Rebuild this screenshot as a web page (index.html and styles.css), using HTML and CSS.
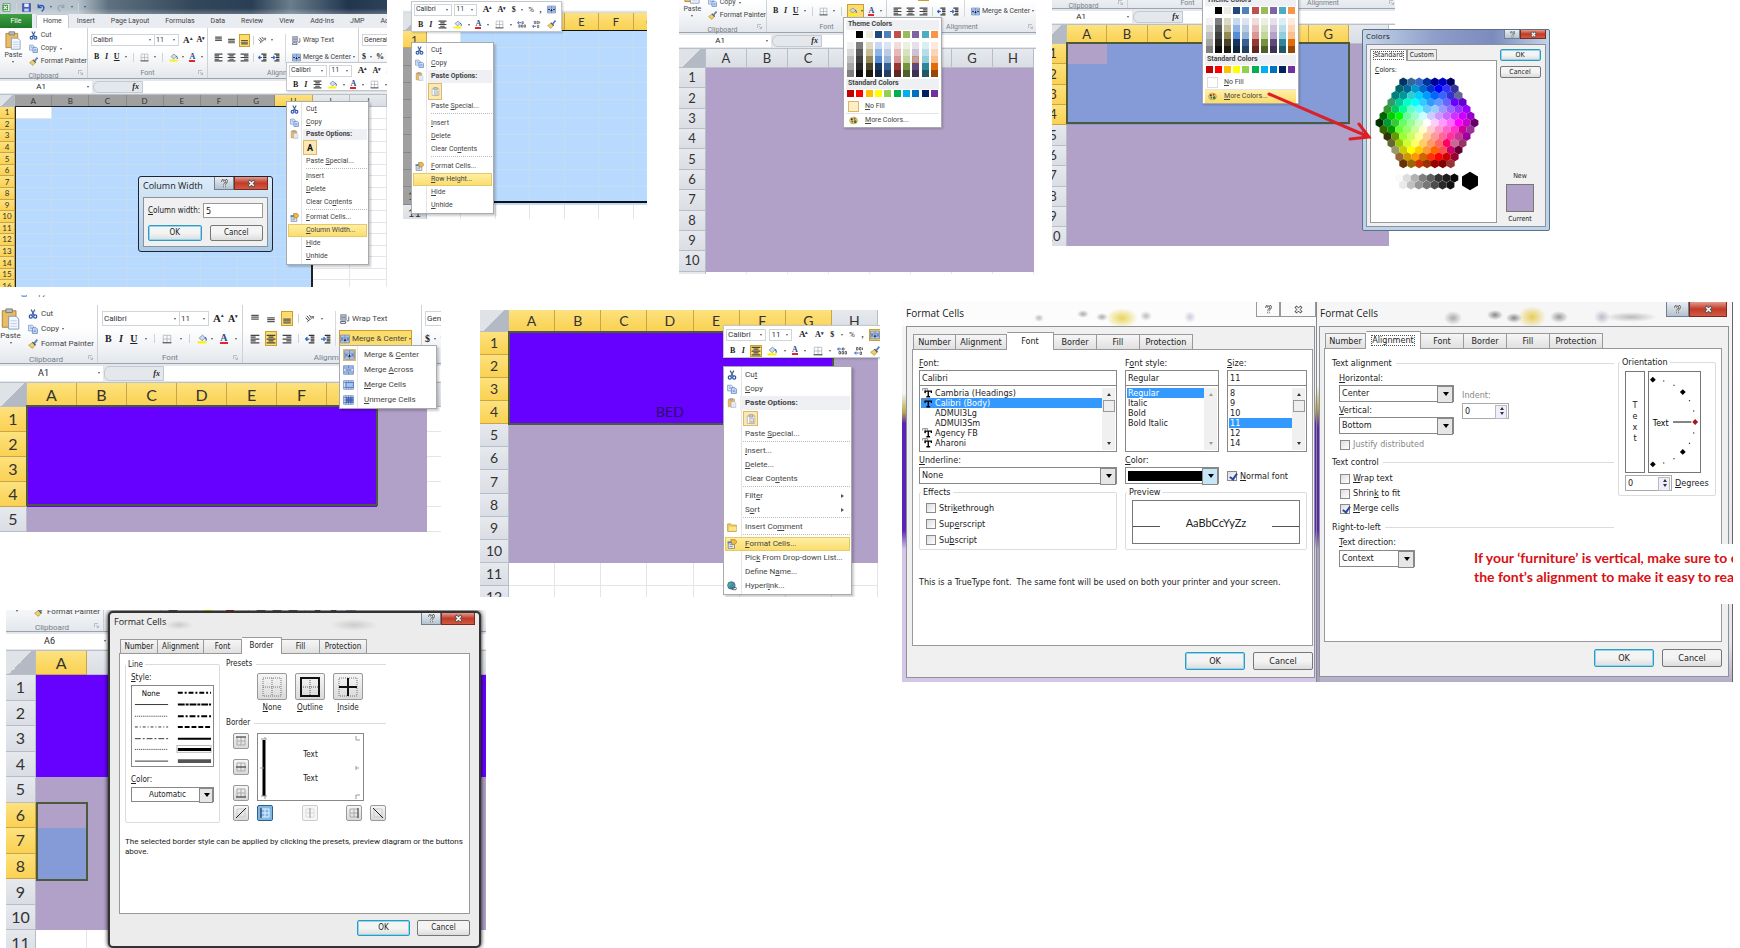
FILE: index.html
```html
<!DOCTYPE html>
<html lang="en">
<head>
<meta charset="utf-8">
<title>Spreadsheet floor plan: step by step</title>
<link rel="stylesheet" href="styles.css">
</head>
<body>
<svg class="defs" aria-hidden="true">
  <symbol id="i-excel" viewBox="0 0 16 16"><path d="M2 1h12v14H2z" fill="#fff" stroke="#2b7a2f"/><path d="M1 3h10v10H1z" fill="#3a9440"/><path d="M3 5l6 6M9 5l-6 6" stroke="#fff" stroke-width="2"/></symbol>
  <symbol id="i-save" viewBox="0 0 16 16"><path d="M1 1h14v14H1z" fill="#4a5fc0" stroke="#27348a"/><path d="M4 1h8v6H4z" fill="#e8eefc"/><path d="M4 10h8v5H4z" fill="#c5cdec"/></symbol>
  <symbol id="i-undo" viewBox="0 0 16 16"><path d="M4 2v6h6M4 8c3-6 10-4 10 1 0 3-2 5-4 6" fill="none" stroke="#2c55b8" stroke-width="2.5"/></symbol>
  <symbol id="i-redo" viewBox="0 0 16 16"><path d="M12 2v6H7M12 8C9 2 2 4 2 9c0 3 2 5 4 6" fill="none" stroke="#9aa3ad" stroke-width="2"/></symbol>
  <symbol id="i-cut" viewBox="0 0 16 16"><path d="M5 1l5 9M11 1L6 10" stroke="#46628f" stroke-width="2" fill="none"/><circle cx="4.500" cy="12" r="2.500" fill="none" stroke="#2954b0" stroke-width="2"/><circle cx="11.500" cy="12" r="2.500" fill="none" stroke="#2954b0" stroke-width="2"/></symbol>
  <symbol id="i-copy" viewBox="0 0 16 16"><path d="M1 2h6l2 2v7H1z" fill="#e6effc" stroke="#4f79bd"/><path d="M7 6h6l2 2v7H7z" fill="#cfe0f8" stroke="#3563b0"/><path d="M9 10h4M9 12h4M3 5h3M3 7h3" stroke="#5a83c6"/></symbol>
  <symbol id="i-paste" viewBox="0 0 20 24"><path d="M1 3h15v18H1z" fill="#e9bd63" stroke="#a97c2c"/><path d="M5 1h7v4H5z" fill="#b9bcc2" stroke="#777"/><path d="M8 9h8l3 3v11H8z" fill="#f4f8ff" stroke="#7d93b5"/><path d="M10 14h7M10 17h7M10 20h7" stroke="#b9c9e2"/></symbol>
  <symbol id="i-clip" viewBox="0 0 16 16"><path d="M2 3h12v12H2z" fill="#fff" stroke="#999"/><path d="M5 1h6v4H5z" fill="#ccc" stroke="#888"/><path d="M6 7h6v7H6z" fill="#f5f5f5" stroke="#999"/><path d="M7 10h4M7 12h4" stroke="#aaa"/></symbol>
  <symbol id="i-brush" viewBox="0 0 16 16"><path d="M15 1l-5 6" stroke="#5b7fc0" stroke-width="3"/><path d="M8 5l4 4-5 6-6-5z" fill="#efd264" stroke="#a68425"/><path d="M7 5l5 5" stroke="#4a5a78" stroke-width="2"/></symbol>
  <symbol id="i-borders" viewBox="0 0 16 16"><path d="M2 2h12M2 8h12M2 2v12M8 2v12M14 2v12" stroke="#9aa0a8" fill="none"/><path d="M1 14h14" stroke="#555" stroke-width="2"/></symbol>
  <symbol id="i-bucket" viewBox="0 0 18 16"><path d="M1 12h16v4H1z" fill="#fff200"/><path d="M4 6l6-5 5 5-6 5z" fill="#cfdcee" stroke="#47618c"/><path d="M14 5c3 1 3 4 2 6" stroke="#2c5aa8" stroke-width="2" fill="none"/></symbol>
  <symbol id="i-top" viewBox="0 0 16 16"><path d="M2 2h12M2 5h12M2 8h12" stroke="#555" stroke-width="2"/></symbol>
  <symbol id="i-mid" viewBox="0 0 16 16"><path d="M2 6h12M2 9h12M2 12h12" stroke="#555" stroke-width="2"/></symbol>
  <symbol id="i-bot" viewBox="0 0 16 16"><path d="M2 8h12M2 11h12M2 14h12" stroke="#555" stroke-width="2"/></symbol>
  <symbol id="i-left" viewBox="0 0 16 16"><path d="M1 2h14M1 5h8M1 8h14M1 11h8M1 14h14" stroke="#444" stroke-width="2"/></symbol>
  <symbol id="i-center" viewBox="0 0 16 16"><path d="M1 2h14M4 5h8M1 8h14M4 11h8M1 14h14" stroke="#444" stroke-width="2"/></symbol>
  <symbol id="i-right" viewBox="0 0 16 16"><path d="M1 2h14M7 5h8M1 8h14M7 11h8M1 14h14" stroke="#444" stroke-width="2"/></symbol>
  <symbol id="i-orient" viewBox="0 0 16 16"><path d="M3 13L14 4M14 4l-4 0M14 4l-1 4" stroke="#777" stroke-width="1.500" fill="none"/><path d="M1 6l5 5M3 3l5 6M7 2l3 4" stroke="#333" stroke-width="1.500"/></symbol>
  <symbol id="i-outdent" viewBox="0 0 16 16"><path d="M6 2h9M9 5h6M9 8h6M9 11h6M6 14h9" stroke="#333" stroke-width="2"/><path d="M7 8H2M4 5L1 8l3 3" stroke="#2c5ec4" stroke-width="2" fill="none"/></symbol>
  <symbol id="i-indent" viewBox="0 0 16 16"><path d="M6 2h9M9 5h6M9 8h6M9 11h6M6 14h9" stroke="#333" stroke-width="2"/><path d="M0 8h5M4 5l3 3-3 3" stroke="#2c5ec4" stroke-width="2" fill="none"/></symbol>
  <symbol id="i-wrap" viewBox="0 0 16 16"><path d="M1 1h9v4H1zM1 6h9v4H1z" fill="#b5bcc7" stroke="#6b7482"/><path d="M1 12h8v3H1zM14 4v7h-3" fill="none" stroke="#55617a" stroke-width="1.500"/></symbol>
  <symbol id="i-merge" viewBox="0 0 18 16"><path d="M1 1h16v14H1z" fill="#b9cdee" stroke="#4d6ea9"/><path d="M1 5h16M1 11h16M9 1v4M9 11v4" stroke="#4d6ea9"/><path d="M2 8h4M12 8h4" stroke="#1c3f91" stroke-width="2"/><path d="M7 11l2-5 2 5z" fill="#111"/></symbol>
  <symbol id="i-across" viewBox="0 0 18 16"><path d="M1 1h16v14H1z" fill="#a9c3ee" stroke="#4d6ea9"/><path d="M1 5h16M1 11h16M9 1v4M9 11v4" stroke="#4d6ea9"/><path d="M2 6h14v4H2z" fill="#e8f0fc"/><path d="M4 8h10" stroke="#1c3f91" stroke-width="1.500"/></symbol>
  <symbol id="i-cells" viewBox="0 0 18 16"><path d="M1 1h16v14H1z" fill="#dce8fa" stroke="#4d6ea9"/><path d="M1 4h16M5 1v14M13 1v3M13 12v3M1 12h16M9 1v3M9 12v3" stroke="#4d6ea9"/><path d="M5 4h12v8H5z" fill="#a4c4f4" stroke="#3461b6"/></symbol>
  <symbol id="i-unmerge" viewBox="0 0 18 16"><path d="M1 1h16v14H1z" fill="#dce8fa" stroke="#4d6ea9"/><path d="M5 4h12v8H5z" fill="#5c86d8"/><path d="M1 4h16M1 8h16M1 12h16M5 1v14M9 1v14M13 1v14" stroke="#2d4f9a"/></symbol>
  <symbol id="i-format" viewBox="0 0 16 16"><path d="M2 5h10v10H2z" fill="#e9edf5" stroke="#54657f"/><path d="M4 9h5M4 12h5" stroke="#54657f"/><path d="M6 1h7l3 4-4 4H8z" fill="#eebb4a" stroke="#a5711a"/><path d="M1 4h6v3H1z" fill="#5d7fb5"/></symbol>
  <symbol id="i-folder" viewBox="0 0 16 16"><path d="M1 3h5l2 2h7v10H1z" fill="#f2cf56" stroke="#a7841e"/><path d="M3 8h12v6H3z" fill="#fbe68d"/></symbol>
  <symbol id="i-globe" viewBox="0 0 16 16"><circle cx="7" cy="7" r="6" fill="#3f86c8" stroke="#27568e"/><path d="M4 3c3-1 5 1 3 3s-4 2-4 4c-2-2-2-5 1-7zM9 7l3-1c1 3-1 5-3 6z" fill="#57b05a"/><rect x="8" y="10" width="7" height="4" rx="2" fill="none" stroke="#555" stroke-width="1.500"/></symbol>
  <symbol id="i-palette" viewBox="0 0 16 16"><ellipse cx="8" cy="8" rx="7" ry="6" fill="#f0d66c" stroke="#a7882c"/><circle cx="5" cy="6" r="1.800" fill="#333"/><circle cx="10" cy="5" r="1.800" fill="#c33"/><circle cx="11" cy="10" r="2.500" fill="#2c7a35"/><circle cx="6" cy="10" r="1.500" fill="#2a5bc0"/></symbol>
  <symbol id="i-launch" viewBox="0 0 10 10"><path d="M1 8V1h7" fill="none" stroke="#8b9199"/><path d="M4 4l4 4M9 5v4H5" fill="none" stroke="#8b9199"/></symbol>
  <symbol id="i-inc" viewBox="0 0 20 16"><path d="M9 4H2M4 1L1 4l3 3" stroke="#2c5ec4" stroke-width="2" fill="none"/><path d="M11 2h3v4h-3zM4 9h3v5H4zM10 9h3v5h-3zM16 9h3v5h-3z" stroke="#444" stroke-width="1.500" fill="none"/></symbol>
  <symbol id="i-dec" viewBox="0 0 20 16"><path d="M9 12H2M4 9l-3 3 3 3" stroke="#2c5ec4" stroke-width="2" fill="none"/><path d="M5 1h3v5H5zM11 1h3v5h-3zM17 1v5M12 10h3v5h-3z" stroke="#444" stroke-width="1.500" fill="none"/></symbol>
  <symbol id="i-help" viewBox="0 0 12 12"><path d="M3 4c0-4 6-4 6-1 0 2-3 2-3 5M6 9v2" fill="none" stroke="#555" stroke-width="3"/><path d="M3 4c0-4 6-4 6-1 0 2-3 2-3 5M6 9v2" fill="none" stroke="#fff" stroke-width="1.200"/></symbol>
  <symbol id="i-x" viewBox="0 0 12 12"><path d="M2 2l8 8M10 2L2 10" stroke="#555" stroke-width="4"/><path d="M3 3l6 6M9 3L3 9" stroke="#fff" stroke-width="2"/></symbol>
  <symbol id="i-tt" viewBox="0 0 16 16"><path d="M1 4V1h8v3M5 1v8" stroke="#888" stroke-width="1.500" fill="none"/><path d="M5 8V5h10v3M10 5v9M7 14h6" stroke="#000" stroke-width="2.200" fill="none"/></symbol>
</svg>

<template id="ribbon-tpl">
  <div class="ribbon">
    <section class="grp grp-clip">
      <div class="clip">
        <button class="paste"><svg class="paste-ic"><use href="#i-paste"/></svg>Paste<i class="dd"></i></button>
        <div class="clip-list">
          <button><svg class="ic"><use href="#i-cut"/></svg>Cut</button>
          <button><svg class="ic"><use href="#i-copy"/></svg>Copy <i class="dd"></i></button>
          <button><svg class="ic"><use href="#i-brush"/></svg>Format Painter</button>
        </div>
      </div>
      <footer>Clipboard<svg class="launch"><use href="#i-launch"/></svg></footer>
    </section>
    <section class="grp grp-font">
      <div class="row"><span class="combo combo-name"><select aria-label="Font"><option>Calibri</option></select></span><span class="combo combo-size"><select aria-label="Font size"><option>11</option></select></span><button class="glyph big">A<sup>▴</sup></button><button class="glyph">A<sup>▾</sup></button></div>
      <div class="row spread"><button class="glyph">B</button><button class="glyph it">I</button><button class="glyph ul">U</button><i class="dd"></i><i class="vr"></i><button aria-label="Borders"><svg class="ic"><use href="#i-borders"/></svg></button><i class="dd"></i><i class="vr"></i><button class="fillbtn" aria-label="Fill color"><svg class="ic"><use href="#i-bucket"/></svg><i class="dd"></i></button><button class="glyph fc" aria-label="Font color">A</button><i class="dd"></i></div>
      <footer>Font<svg class="launch"><use href="#i-launch"/></svg></footer>
    </section>
    <section class="grp grp-align">
      <div class="al">
        <div class="al-left">
          <div class="row"><button aria-label="Top"><svg class="ic"><use href="#i-top"/></svg></button><button aria-label="Middle"><svg class="ic"><use href="#i-mid"/></svg></button><button class="on" aria-label="Bottom"><svg class="ic"><use href="#i-bot"/></svg></button><i class="vr"></i><button aria-label="Orientation"><svg class="ic"><use href="#i-orient"/></svg></button><i class="dd"></i></div>
          <div class="row"><button aria-label="Left"><svg class="ic"><use href="#i-left"/></svg></button><button class="al-c" aria-label="Center"><svg class="ic"><use href="#i-center"/></svg></button><button aria-label="Right"><svg class="ic"><use href="#i-right"/></svg></button><i class="vr"></i><button aria-label="Outdent"><svg class="ic"><use href="#i-outdent"/></svg></button><button aria-label="Indent"><svg class="ic"><use href="#i-indent"/></svg></button></div>
        </div>
        <div class="al-right">
          <button class="wide"><svg class="ic"><use href="#i-wrap"/></svg>Wrap Text</button>
          <button class="wide mc"><svg class="ic"><use href="#i-merge"/></svg>Merge &amp; Center <i class="dd"></i></button>
        </div>
      </div>
      <footer>Alignment<svg class="launch"><use href="#i-launch"/></svg></footer>
    </section>
    <section class="grp grp-num">
      <div class="row"><span class="combo combo-fmt"><select aria-label="Number format"><option>General</option></select></span></div>
      <div class="row"><button class="glyph">$</button><i class="dd"></i><button class="glyph">%</button></div>
    </section>
  </div>
</template>

<template id="mini-tpl">
  <div class="row"><span class="combo combo-name"><select aria-label="Font"><option>Calibri</option></select></span><span class="combo combo-size"><select aria-label="Font size"><option>11</option></select></span><button class="glyph big">A<sup>▴</sup></button><button class="glyph">A<sup>▾</sup></button><button class="glyph">$</button><i class="dd"></i><button class="pct">%</button><button class="glyph">,</button><button class="mm" aria-label="Merge"><svg class="ic"><use href="#i-merge"/></svg></button></div>
  <div class="row"><button class="glyph">B</button><button class="glyph it">I</button><button class="mcen" aria-label="Center"><svg class="ic"><use href="#i-center"/></svg></button><button aria-label="Fill color"><svg class="ic"><use href="#i-bucket"/></svg></button><i class="dd"></i><button class="glyph fc" aria-label="Font color">A</button><i class="dd"></i><button aria-label="Borders"><svg class="ic"><use href="#i-borders"/></svg></button><i class="dd"></i><button aria-label="Increase decimal"><svg class="ic"><use href="#i-inc"/></svg></button><button aria-label="Decrease decimal"><svg class="ic"><use href="#i-dec"/></svg></button><button aria-label="Format painter"><svg class="ic"><use href="#i-brush"/></svg></button></div>
</template>

<main class="board">
  <div class="strip">
    <div class="pair">
      <figure class="shot s-col">
        <header class="titlebar"><svg class="ic"><use href="#i-excel"/></svg><i class="vr"></i><svg class="ic"><use href="#i-save"/></svg><svg class="ic"><use href="#i-undo"/></svg><i class="dd"></i><svg class="ic"><use href="#i-redo"/></svg><i class="dd"></i><i class="vr"></i><i class="dd"></i></header>
        <nav class="tabs"><a class="file" href="#">File</a><a class="cur" href="#">Home</a><a href="#">Insert</a><a href="#">Page Layout</a><a href="#">Formulas</a><a href="#">Data</a><a href="#">Review</a><a href="#">View</a><a href="#">Add-Ins</a><a href="#">JMP</a><a href="#">Acrobat</a></nav>
        <div data-tpl="ribbon-tpl"></div>
        <div class="fbar"><span class="name">A1<i class="dd"></i></span><span class="fx"><em>fx</em></span><input aria-label="Formula"></div>
        <table class="sheet" data-cols="ABCDEFGHIJ" data-rows="16" data-hot="H1:H16" data-hotrows data-mute="ABCDEFG" data-fill="A1:H16=blue A1:A1=white"></table>
        <i class="edge edge-col"></i>
        <section class="dialog d-col">
          <header><h2>Column Width</h2><span class="caps"><button aria-label="Help"><svg><use href="#i-help"/></svg></button><button class="close" aria-label="Close"><svg><use href="#i-x"/></svg></button></span></header>
          <div class="pane">
            <div class="field"><label for="cw"><u>C</u>olumn width:</label><input id="cw" value="5"></div>
            <div class="btns"><button class="btn def">OK</button><button class="btn">Cancel</button></div>
          </div>
        </section>
        <div class="mini" data-tpl="mini-tpl"></div>
        <ul class="menu">
          <li><button><svg class="ic"><use href="#i-cut"/></svg>Cu<u>t</u></button></li>
          <li><button><svg class="ic"><use href="#i-copy"/></svg><u>C</u>opy</button></li>
          <li class="head"><svg class="ic"><use href="#i-paste"/></svg>Paste Options:</li>
          <li class="opt"><button class="tile">A</button></li>
          <li><button>Paste <u>S</u>pecial...</button></li>
          <li class="sep"></li>
          <li><button><u>I</u>nsert</button></li>
          <li><button><u>D</u>elete</button></li>
          <li><button>Clear Co<u>n</u>tents</button></li>
          <li class="sep"></li>
          <li><button><svg class="ic"><use href="#i-format"/></svg><u>F</u>ormat Cells...</button></li>
          <li class="hot"><button><u>C</u>olumn Width...</button></li>
          <li><button><u>H</u>ide</button></li>
          <li><button><u>U</u>nhide</button></li>
        </ul>
      </figure>
      <figure class="shot s-row">
        <div class="band"></div>
        <table class="sheet" data-cols="ABCDEFG" data-rows="11" data-hot="A1:G1" data-muterows="2-10" data-fill="A1:G10=blue A1:A1=white"></table>
        <i class="edge edge-row"></i>
        <div class="mini" data-tpl="mini-tpl"></div>
        <ul class="menu">
          <li><button><svg class="ic"><use href="#i-cut"/></svg>Cu<u>t</u></button></li>
          <li><button><svg class="ic"><use href="#i-copy"/></svg><u>C</u>opy</button></li>
          <li class="head"><svg class="ic"><use href="#i-paste"/></svg>Paste Options:</li>
          <li class="opt"><button class="tile" aria-label="Paste"><svg class="ic"><use href="#i-clip"/></svg></button></li>
          <li><button>Paste <u>S</u>pecial...</button></li>
          <li class="sep"></li>
          <li><button><u>I</u>nsert</button></li>
          <li><button><u>D</u>elete</button></li>
          <li><button>Clear Co<u>n</u>tents</button></li>
          <li class="sep"></li>
          <li><button><svg class="ic"><use href="#i-format"/></svg><u>F</u>ormat Cells...</button></li>
          <li class="hot"><button><u>R</u>ow Height...</button></li>
          <li><button><u>H</u>ide</button></li>
          <li><button><u>U</u>nhide</button></li>
        </ul>
      </figure>
    </div>
    <div class="pair">
      <figure class="shot s-fill">
        <div data-tpl="ribbon-tpl"></div>
        <div class="fbar"><span class="name">A1<i class="dd"></i></span><span class="fx"><em>fx</em></span><input aria-label="Formula"></div>
        <table class="sheet" data-cols="ABCDEFGH" data-rows="11" data-fill="A1:H10=lilac"></table>
        <div class="palette" data-palette></div>
      </figure>
      <figure class="shot s-more">
        <div class="crop">
          <div class="slide">
            <div data-tpl="ribbon-tpl"></div>
            <div class="fbar"><span class="name">A1<i class="dd"></i></span><span class="fx"><em>fx</em></span><input aria-label="Formula"></div>
            <table class="sheet" data-cols="ABCDEFGH" data-rows="11" data-hot="A1:G4" data-fill="A1:H10=lilac A1:G4=steel A1:A1=lilac"></table>
          </div>
          <i class="edge edge-sel"></i>
          <div class="palette" data-palette></div>
        </div>
        <section class="dialog d-colors">
          <header><h2>Colors</h2><span class="caps"><button aria-label="Help"><svg><use href="#i-help"/></svg></button><button class="close" aria-label="Close"><svg><use href="#i-x"/></svg></button></span></header>
          <div class="pane">
            <div class="picker">
              <div class="ptabs"><button class="cur"><span>Standard</span></button><button>Custom</button></div>
              <div class="sheet-page"><label><u>C</u>olors:</label><svg id="hexes" class="hexes" viewBox="0 0 112 120"></svg></div>
            </div>
            <div class="side"><button class="btn def">OK</button><button class="btn">Cancel</button><span class="new">New</span><i class="chip"></i><span>Current</span></div>
          </div>
        </section>
        <svg class="arrow" viewBox="0 0 110 60"><path d="M3 4L103 47M93 34l10 13-19 2" fill="none" stroke="#dd2027" stroke-width="3" stroke-linecap="round"/></svg>
      </figure>
    </div>
  </div>

  <div class="strip lower">
    <div class="left">
      <div class="pair wide-gap">
        <figure class="shot s-merge">
          <div class="sliver"><svg class="ic"><use href="#i-copy"/></svg>Copy</div>
          <div class="lg" data-tpl="ribbon-tpl"></div>
          <div class="fbar lg"><span class="name">A1<i class="dd"></i></span><span class="fx"><em>fx</em></span><input aria-label="Formula"></div>
          <table class="sheet" data-cols="ABCDEFGHI" data-rows="5" data-hot="A1:G4" data-fill="A1:H5=lilac A1:G4=violet"></table>
          <i class="edge edge-sel"></i>
          <ul class="menu drop">
            <li><button><span class="tile"><svg class="ic"><use href="#i-merge"/></svg></span>Merge &amp; <u>C</u>enter</button></li>
            <li><button><svg class="ic"><use href="#i-across"/></svg>Merge <u>A</u>cross</button></li>
            <li><button><svg class="ic"><use href="#i-cells"/></svg><u>M</u>erge Cells</button></li>
            <li><button><svg class="ic"><use href="#i-unmerge"/></svg><u>U</u>nmerge Cells</button></li>
          </ul>
        </figure>
        <figure class="shot s-bed">
          <table class="sheet" data-cols="ABCDEFGH" data-rows="12" data-hot="A1:G4" data-fill="A1:H10=lilac A1:G4=violet" data-text="D4=BED"></table>
          <i class="edge edge-sel"></i>
          <div class="mini" data-tpl="mini-tpl"></div>
          <ul class="menu">
            <li><button><svg class="ic"><use href="#i-cut"/></svg>Cu<u>t</u></button></li>
            <li><button><svg class="ic"><use href="#i-copy"/></svg><u>C</u>opy</button></li>
            <li class="head"><svg class="ic"><use href="#i-paste"/></svg>Paste Options:</li>
            <li class="opt"><button class="tile" aria-label="Paste"><svg class="ic"><use href="#i-clip"/></svg></button></li>
            <li><button>Paste <u>S</u>pecial...</button></li>
            <li class="sep"></li>
            <li><button><u>I</u>nsert...</button></li>
            <li><button><u>D</u>elete...</button></li>
            <li><button>Clear Co<u>n</u>tents</button></li>
            <li class="sep"></li>
            <li><button>Filt<u>e</u>r<i class="sub"></i></button></li>
            <li><button>S<u>o</u>rt<i class="sub"></i></button></li>
            <li class="sep"></li>
            <li><button><svg class="ic"><use href="#i-folder"/></svg>Insert Co<u>m</u>ment</button></li>
            <li class="sep"></li>
            <li class="hot"><button><svg class="ic"><use href="#i-format"/></svg><u>F</u>ormat Cells...</button></li>
            <li><button>Pic<u>k</u> From Drop-down List...</button></li>
            <li><button>Define N<u>a</u>me...</button></li>
            <li><button><svg class="ic"><use href="#i-globe"/></svg>Hyperl<u>i</u>nk...</button></li>
          </ul>
        </figure>
      </div>
      <figure class="shot s-border">
        <div class="lg" data-tpl="ribbon-tpl"></div>
        <div class="fbar lg"><span class="name">A6<i class="dd"></i></span><span class="fx"><em>fx</em></span><input aria-label="Formula"></div>
        <table class="sheet" data-cols="ABCDEFGHI" data-rows="11" data-hot="A6:A8" data-fill="A1:I10=lilac A1:I4=violet A7:A8=steel"></table>
        <i class="edge edge-sel"></i>
        <section class="dialog fmt d-border">
          <header><h2>Format Cells</h2><span class="caps"><button aria-label="Help"><svg><use href="#i-help"/></svg></button><button class="close" aria-label="Close"><svg><use href="#i-x"/></svg></button></span></header>
          <div class="pane">
            <div class="ftabs"><button>Number</button><button>Alignment</button><button>Font</button><button class="cur">Border</button><button>Fill</button><button>Protection</button></div>
            <div class="page">
              <div class="bcols">
                <fieldset class="line"><legend>Line</legend>
                  <span class="lbl"><u>S</u>tyle:</span>
                  <svg class="styles" viewBox="0 0 83 82">
                    <rect x="46" y="61" width="35" height="7" fill="none" stroke="#bbb"/>
                    <g stroke="#333" fill="none"><path d="M3 19h34"/><path d="M3 31h34" stroke-dasharray="1 1"/><path d="M3 42h34" stroke-dasharray="3 2 1 2"/><path d="M3 54h34" stroke-dasharray="6 2 2 2"/><path d="M3 65h34" stroke-dasharray="1 1"/><path d="M3 77h34"/></g>
                    <g stroke="#000" fill="none" stroke-width="2"><path d="M47 7h34" stroke-dasharray="5 2 2 2"/><path d="M47 19h34" stroke-dasharray="7 1 3 1"/><path d="M47 31h34" stroke-dasharray="6 2 2 2"/><path d="M47 42h34" stroke-dasharray="5 2"/><path d="M47 54h34"/><path d="M47 65h34" stroke-width="3"/><path d="M47 76h34M47 78h34" stroke="#555"/></g>
                    <text x="10" y="10">None</text>
                  </svg>
                  <label class="lbl" for="bc"><u>C</u>olor:</label>
                  <span class="pick"><select id="bc"><option>Automatic</option></select></span>
                </fieldset>
                <div class="bright">
                  <div class="rule">Presets</div>
                  <div class="presets">
                    <div><button aria-label="None"><svg viewBox="0 0 22 22"><path d="M2 2h18v18H2zM11 2v18M2 11h18" fill="none" stroke="#777" stroke-dasharray="1 1"/></svg></button><span><u>N</u>one</span></div>
                    <div><button aria-label="Outline"><svg viewBox="0 0 22 22"><path d="M11 2v18M2 11h18" stroke="#555" stroke-dasharray="1 1"/><path d="M2 2h18v18H2z" fill="none" stroke="#111" stroke-width="2"/></svg></button><span><u>O</u>utline</span></div>
                    <div><button aria-label="Inside"><svg viewBox="0 0 22 22"><path d="M2 2h18v18H2z" fill="none" stroke="#777" stroke-dasharray="1 1"/><path d="M11 2v18M2 11h18" stroke="#111" stroke-width="2"/></svg></button><span><u>I</u>nside</span></div>
                  </div>
                  <div class="rule">Border</div>
                  <div class="bgrid">
                    <button aria-label="Top"><svg viewBox="0 0 12 12"><path d="M2 2v8h8V2M6 2v8M2 6h8" fill="none" stroke="#aaa"/><path d="M1 2h10" stroke="#222"/></svg></button>
                    <button aria-label="Middle"><svg viewBox="0 0 12 12"><path d="M2 2h8v8H2zM6 2v8" fill="none" stroke="#aaa"/><path d="M1 6h10" stroke="#222"/></svg></button>
                    <button aria-label="Bottom"><svg viewBox="0 0 12 12"><path d="M2 10V2h8v8M6 2v8M2 6h8" fill="none" stroke="#aaa"/><path d="M1 10h10" stroke="#222"/></svg></button>
                    <div class="prev"><span>Text</span><span>Text</span><svg viewBox="0 0 105 67"><path d="M6 6v56" stroke="#000" stroke-width="3"/><path d="M3 5h6M2 34h4M3 62h6M7 3v2M7 62v3M98 2v4h4M98 32v4M98 34h3M98 65v-4h4" fill="none" stroke="#999"/></svg></div>
                    <div class="brow">
                      <button aria-label="Diagonal up"><svg viewBox="0 0 12 12"><path d="M2 2h8v8H2z" fill="none" stroke="#ccc"/><path d="M1 11L11 1" stroke="#222"/></svg></button>
                      <button class="on" aria-label="Left"><svg viewBox="0 0 12 12"><path d="M2 2h8v8H2M6 2v8M2 6h8" fill="none" stroke="#e8f4ff"/><path d="M2 1v10" stroke="#113"/></svg></button>
                      <button class="off" aria-label="Vertical"><svg viewBox="0 0 12 12"><path d="M2 2h8v8H2zM2 6h8" fill="none" stroke="#ddd"/><path d="M6 1v10" stroke="#999"/></svg></button>
                      <button aria-label="Right"><svg viewBox="0 0 12 12"><path d="M10 2H2v8h8M6 2v8M2 6h8" fill="none" stroke="#aaa"/><path d="M10 1v10" stroke="#222"/></svg></button>
                      <button aria-label="Diagonal down"><svg viewBox="0 0 12 12"><path d="M2 2h8v8H2z" fill="none" stroke="#ccc"/><path d="M1 1l10 10" stroke="#222"/></svg></button>
                    </div>
                  </div>
                </div>
              </div>
              <p>The selected border style can be applied by clicking the presets, preview diagram or the buttons above.</p>
            </div>
            <div class="btns"><button class="btn def">OK</button><button class="btn">Cancel</button></div>
          </div>
        </section>
      </figure>
    </div>

    <div class="right">
      <figure class="shot s-font">
        <section class="dialog fmt d-font">
          <header><h2>Format Cells</h2><span class="caps pale"><button aria-label="Help"><svg><use href="#i-help"/></svg></button><button aria-label="Close"><svg><use href="#i-x"/></svg></button></span></header>
          <div class="pane">
            <div class="ftabs"><button>Number</button><button>Alignment</button><button class="cur">Font</button><button>Border</button><button>Fill</button><button>Protection</button></div>
            <div class="page">
              <div class="fcols">
                <div class="fcol"><label for="fn"><u>F</u>ont:</label><input id="fn" value="Calibri">
                  <div class="list"><ul role="listbox" class="named"><li><svg><use href="#i-tt"/></svg>Cambria (Headings)</li><li class="sel"><svg><use href="#i-tt"/></svg>Calibri (Body)</li><li>ADMUI3Lg</li><li>ADMUI3Sm</li><li><svg><use href="#i-tt"/></svg>Agency FB</li><li><svg><use href="#i-tt"/></svg>Aharoni</li></ul><span class="bar"><i class="up"></i><b></b><i class="dn"></i></span></div></div>
                <div class="fcol"><label for="fs">F<u>o</u>nt style:</label><input id="fs" value="Regular">
                  <div class="list"><ul role="listbox"><li class="sel">Regular</li><li>Italic</li><li>Bold</li><li>Bold Italic</li></ul><span class="bar dim"><i class="up"></i><i class="dn"></i></span></div></div>
                <div class="fcol"><label for="fz"><u>S</u>ize:</label><input id="fz" value="11">
                  <div class="list"><ul role="listbox"><li>8</li><li>9</li><li>10</li><li class="sel">11</li><li>12</li><li>14</li></ul><span class="bar"><i class="up"></i><b></b><i class="dn"></i></span></div></div>
                <div class="fcol"><label for="un"><u>U</u>nderline:</label><span class="pick"><select id="un"><option>None</option></select></span></div>
                <div class="fcol"><label for="co"><u>C</u>olor:</label><span class="pick ink"><select id="co" aria-label="Color"><option></option></select></span></div>
                <div class="fcol end"><label class="chk"><input type="checkbox" checked><span><u>N</u>ormal font</span></label></div>
              </div>
              <div class="fsets">
                <fieldset><legend>Effects</legend>
                  <label class="chk"><input type="checkbox"><span>Stri<u>k</u>ethrough</span></label>
                  <label class="chk"><input type="checkbox"><span>Sup<u>e</u>rscript</span></label>
                  <label class="chk"><input type="checkbox"><span>Su<u>b</u>script</span></label>
                </fieldset>
                <fieldset class="pv"><legend>Preview</legend><div class="sample"><i></i>AaBbCcYyZz<i></i></div></fieldset>
              </div>
              <p>This is a TrueType font.&nbsp; The same font will be used on both your printer and your screen.</p>
            </div>
            <div class="btns"><button class="btn def">OK</button><button class="btn">Cancel</button></div>
          </div>
        </section>
      </figure>
      <figure class="shot s-align">
        <section class="dialog fmt d-align">
          <header><h2>Format Cells</h2><span class="caps"><button aria-label="Help"><svg><use href="#i-help"/></svg></button><button class="close" aria-label="Close"><svg><use href="#i-x"/></svg></button></span></header>
          <div class="pane">
            <div class="ftabs"><button>Number</button><button class="cur"><span>Alignment</span></button><button>Font</button><button>Border</button><button>Fill</button><button>Protection</button></div>
            <div class="page">
              <div class="acols">
                <div class="amain">
                  <div class="rule">Text alignment</div>
                  <div class="agrid">
                    <div class="avert"><label for="ho"><u>H</u>orizontal:</label><span class="pick"><select id="ho"><option>Center</option></select></span><label for="ve"><u>V</u>ertical:</label><span class="pick"><select id="ve"><option>Bottom</option></select></span></div>
                    <div class="aind"><label for="ind">Indent:</label><span class="spin"><input id="ind" value="0"><i class="up"></i><i class="dn"></i></span></div>
                  </div>
                  <label class="chk ind dim"><input type="checkbox" disabled><span>Justify distributed</span></label>
                  <div class="rule">Text control</div>
                  <label class="chk ind"><input type="checkbox"><span><u>W</u>rap text</span></label>
                  <label class="chk ind"><input type="checkbox"><span>Shrin<u>k</u> to fit</span></label>
                  <label class="chk ind"><input type="checkbox" checked><span><u>M</u>erge cells</span></label>
                  <div class="rule">Right-to-left</div>
                  <div class="adir"><label for="td"><u>T</u>ext direction:</label><span class="pick"><select id="td"><option>Context</option></select></span></div>
                </div>
                <fieldset class="ori"><legend>Orientation</legend>
                  <div class="obox"><button class="otext"><span>T</span><span>e</span><span>x</span><span>t</span></button>
                    <svg class="dial" viewBox="0 0 53 102"><g id="dots"></g><path d="M25 51h19" stroke="#000"/><text x="4" y="55">Text</text></svg></div>
                  <div class="odeg"><span class="spin"><input id="deg" value="0"><i class="up"></i><i class="dn"></i></span><label for="deg"><u>D</u>egrees</label></div>
                </fieldset>
              </div>
            </div>
            <div class="btns"><button class="btn def">OK</button><button class="btn">Cancel</button></div>
          </div>
        </section>
        <figcaption class="note">If your ‘furniture’ is vertical, make sure to change<br>the font’s alignment to make it easy to read!</figcaption>
      </figure>
    </div>
  </div>
</main>
<script src="app.js"></script>
</body>
</html>
```
FILE: styles.css
```css
* { box-sizing: border-box; }
body { margin: 0; background: #fff; font-family: Roboto, "Open Sans", sans-serif; font-size: 7px; line-height: 1; color: #444; overflow: hidden; }
figure, h2, p, ul, fieldset { margin: 0; padding: 0; border: 0; }
ul { list-style: none; }
button, input, select { font: inherit; color: inherit; margin: 0; padding: 0; border: 0; background: none; border-radius: 0; white-space: nowrap; }
select { appearance: none; outline: 0; }
input { outline: 0; min-width: 0; }
button { display: inline-flex; align-items: center; justify-content: center; }
a { color: inherit; text-decoration: none; }
u { text-underline-offset: 1px; text-decoration-thickness: 1px; }
i { font-style: normal; }
.defs { position: absolute; width: 0; height: 0; }

/* page layout */
.board { display: flex; flex-direction: column; gap: 8px; }
.strip { display: flex; gap: 32px; height: 287px; }
.pair { display: flex; gap: 16px; }
.wide-gap { gap: 39px; }
.lower { gap: 22px; height: auto; }
.left { display: flex; flex-direction: column; gap: 13px; }
.right { display: flex; margin-top: 7px; }
.shot { position: relative; overflow: hidden; flex: none; align-self: flex-start; }
.s-col { width: 387px; height: 287px; }
.s-row { width: 244px; height: 219px; }
.s-fill { width: 357px; height: 274px; }
.s-more { width: 498px; height: 246px; }
.s-merge { width: 441px; height: 238px; }
.s-bed { width: 400px; height: 287px; margin-top: 15px; }
.s-border { width: 480px; height: 338px; margin-left: 6px; }
.s-font { width: 415px; }
.s-align { width: 416px; }

/* small parts */
.ic { width: 9px; height: 9px; flex: none; display: block; }
.dd { width: 0; height: 0; border: 1px solid transparent; border-top: 2px solid #555; border-bottom: 0; flex: none; outline: 0; box-sizing: content-box; }
.vr { width: 1px; height: 9px; background: #cfd3d8; flex: none; }
.glyph { font-family: "Liberation Serif", serif; font-weight: bold; font-size: 8px; color: #222; }
.glyph.big { font-size: 9px; }
.glyph sup { font-size: 5px; color: #335; line-height: 1; align-self: flex-start; }
.it { font-style: italic; }
.ul { text-decoration: underline; }
.fc { color: #2a4a8c; border-bottom: 2px solid #e0262d; line-height: 7px; }
.on { background: #fcdc6c; outline: 1px solid #c9a030; }

/* title bar and tabs */
.titlebar { display: flex; align-items: center; gap: 5px; height: 14px; padding: 0 2px; background: linear-gradient(#0000 60%, #ffffff40), linear-gradient(90deg, #c2ccd4 0, #b4c2cc 20%, #5f7180 28%, #33475a 50%, #2a3f54 65%, #6a7d8c 75%, #20364d 90%, #2d4258); }
.tabs { display: flex; align-items: center; gap: 16px; height: 14px; background: #e9edf1; white-space: nowrap; }
.tabs a { flex: none; }
.tabs .file { align-self: stretch; display: flex; align-items: center; justify-content: center; width: 32px; background: linear-gradient(#3fa043, #1f7a28); color: #fff; }
.tabs .cur { align-self: stretch; display: flex; align-items: center; padding: 0 6px; margin: 0 -8px 0 -12px; background: #fff; border-radius: 2px 2px 0 0; border: 1px solid #c4cad1; border-bottom: 0; }

/* ribbon */
.ribbon { display: flex; height: 51px; width: 480px; background: linear-gradient(#fff 40%, #f0f2f5 75%, #e3e7ec); border-bottom: 1px solid #9ba3ad; color: #444; }
.grp { display: flex; flex-direction: column; gap: 5px; padding: 6px 3px 0; border-right: 1px solid #cdd2d8; flex: none; position: relative; }
.grp footer { margin-top: auto; height: 10px; display: flex; justify-content: center; align-items: center; color: #777f88; }
.launch { position: absolute; right: 4px; bottom: 3px; width: 5px; height: 5px; }
.grp .row { display: flex; align-items: center; height: 12px; gap: 4px; }
.grp .grp-clip, .grp-clip { width: 88px; padding: 1px 0 0; }
.clip { display: flex; gap: 2px; }
.paste { flex-direction: column; width: 27px; justify-content: flex-start; padding-top: 2px; gap: 2px; }
.paste-ic { width: 16px; height: 19px; }
.clip-list { display: flex; flex-direction: column; }
.clip-list button { height: 13px; justify-content: flex-start; gap: 3px; }
.grp-font { width: 120px; }
.grp .spread { justify-content: space-between; padding: 0 1px 0 3px; }
.fillbtn { gap: 4px; height: 12px; }
.grp-align { width: 151px; }
.al { display: flex; gap: 6px; }
.al-left { display: flex; flex-direction: column; gap: 5px; width: 75px; border-right: 1px solid #d6dae0; padding-left: 3px; }
.al-left .row button { width: 9px; height: 11px; }
.al-right { display: flex; flex-direction: column; gap: 5px; }
.wide { height: 12px; gap: 2px; justify-content: flex-start; }
.grp-num { width: 117px; border: 0; }
.combo { display: inline-flex; align-items: center; height: 12px; background: #fff; border: 1px solid #d0d5db; position: relative; flex: none; }
.combo select { width: 100%; padding-left: 1px; color: #333; }
.combo::after { content: ""; position: absolute; right: 3px; border: 1px solid transparent; border-top: 2px solid #555; border-bottom: 0; }
.combo-name { width: 64px; }
.combo-size { width: 25px; margin-left: -5px; }
.combo-fmt { width: 60px; }
.lg { font-size: 8px; }
.lg .ribbon { height: 59px; width: 500px; margin-left: -5px; }
.lg .ic { width: 10px; height: 10px; }
.lg .glyph { font-size: 10px; }
.lg .glyph.big { font-size: 11px; }
.lg .fc { line-height: 8px; }
.lg .grp .row, .lg .combo, .lg .wide { height: 15px; }
.lg .grp-clip { width: 103px; }
.lg .grp-font { width: 145px; padding: 6px 4px 0; }
.lg .grp-align { width: 179px; }
.lg .combo-name { width: 78px; }
.lg .combo-size { width: 30px; }
.lg .clip-list button { height: 15px; }
.lg .paste-ic { width: 19px; height: 22px; }
.lg .paste { width: 31px; }
.lg .al { gap: 4px; }
.lg .al-left { width: 90px; padding-left: 4px; }
.lg .al-left .row { gap: 6px; }
.lg .al-left .row button { width: 10px; height: 13px; }
.s-merge .al-c, .s-merge .mc { background: #fcdc6c; outline: 1px solid #c9a030; }
.s-fill .fillbtn { background: #fcdc6c; outline: 1px solid #c9a030; }
.fbar { display: flex; align-items: center; height: 16px; background: #e4e8ed; border-bottom: 1px solid #b9c0c8; }
.fbar .name { display: flex; align-items: center; justify-content: flex-end; gap: 41px; width: 92px; height: 12px; padding-right: 3px; background: #fff; color: #222; font-size: 8px; }
.fbar .fx { width: 50px; height: 12px; border-radius: 6px 0 0 6px; border: 1px solid #c3c9d0; margin-left: 1px; display: flex; align-items: center; justify-content: flex-end; padding-right: 3px; color: #222; }
.fbar em { font: italic bold 8px "Liberation Serif", serif; }
.fbar input { flex: 1; background: #fff; height: 12px; }
.fbar.lg { height: 19px; }
.fbar.lg .name { width: 103px; height: 15px; gap: 49px; font-size: 9px; }
.fbar.lg .fx { width: 60px; height: 15px; }
.fbar.lg input { height: 15px; }

/* worksheet */
.sheet { border-collapse: separate; border-spacing: 0; table-layout: fixed; font-family: Lato, "Open Sans", sans-serif; color: #333; text-align: center; flex: none; }
.sheet th, .sheet td { padding: 0; font-weight: normal; overflow: hidden; white-space: nowrap; line-height: 1; }
.sheet th { background: linear-gradient(#e6e9ee, #dadee4); border-right: 1px solid #b8bec7; border-bottom: 1px solid #b8bec7; }
.sheet td { border-right: 1px solid #e2e5ea; border-bottom: 1px solid #e2e5ea; background: #fff; }
.sheet .corner { background: linear-gradient(135deg, #dfe3e8 50%, #b4bac4 50%) no-repeat; }
.sheet th.hot { background: linear-gradient(#fde27e, #fad152); border-color: #c9a44a; }
.sheet th.mute { background: #a0a0a0; border-color: #888; }
.sheet .blue { background: #b8daff; border-color: #c6dcf2; }
.sheet .lilac { background: #b1a0c7; border-color: #b1a0c7; }
.sheet .steel { background: #849bd8; border-color: #849bd8; }
.sheet .violet { background: #6600ff; border-color: #6600ff; color: #2a1060; overflow: visible; }
.edge { position: absolute; pointer-events: none; }
.edge-sel { border: 2px solid #4c5a3c; }
.s-col .sheet { width: 387px; height: 197px; font-size: 8px; }
.s-col .sheet col:first-child { width: 15px; }
.s-col .sheet .top th { height: 12px; }
.edge-col { left: 15px; top: 106px; width: 298px; height: 190px; border: 1px solid #222; border-right-width: 2px; }
.band { height: 13px; background: linear-gradient(#fff 75%, #ccd2da); }
.s-row .sheet { width: 265px; height: 209px; font-size: 11px; }
.s-row .sheet col:first-child { width: 24px; }
.s-row .sheet .top th { height: 18px; }
.edge-row { left: 24px; top: 30px; width: 230px; height: 173px; border: solid #111; border-width: 1px 0 2px; }
.s-fill > [data-tpl] { margin-top: -18px; }
.s-fill .sheet { width: 355px; height: 243px; font-size: 13px; }
.sheet col:first-child { width: 27px; }
.s-fill .top th, .s-more .top th { height: 19px; }
.crop { position: relative; overflow: hidden; width: 343px; height: 246px; }
.slide { margin: -42px 0 0 -12px; width: 355px; }
.s-more .sheet { width: 349px; height: 243px; font-size: 13px; }
.s-more .edge-sel { left: 14px; top: 42px; width: 284px; height: 82px; }
.s-merge .sheet { width: 477px; height: 149px; font-size: 16px; }
.s-merge .top th { height: 24px; }
.s-merge .edge-sel { left: 26px; top: 110px; width: 352px; height: 101px; }
.s-bed .sheet { width: 398px; height: 299px; font-size: 14px; }
.s-bed .sheet col:first-child { width: 29px; }
.s-bed .top th { height: 22px; }
.s-bed .edge-sel { left: 28px; top: 21px; width: 326px; height: 94px; }
.s-border > [data-tpl] { margin-top: -37px; }
.s-border .sheet { width: 491px; height: 305px; font-size: 16px; }
.s-border .sheet col:first-child { width: 30px; }
.s-border .top th { height: 24px; }
.s-border .edge-sel { left: 30px; top: 192px; width: 52px; height: 79px; }
.sliver { display: flex; gap: 3px; align-items: flex-end; height: 2px; overflow: hidden; margin: 0 0 8px 18px; }

/* floating toolbar */
.mini { position: absolute; width: 151px; height: 29px; padding: 1px 2px; background: #fff; border: 1px solid #c2c7ce; box-shadow: 1px 1px 2px #0003; }
.mini .row { display: flex; align-items: center; justify-content: space-between; height: 13px; padding-right: 3px; }
.mini .row + .row { padding-left: 4px; margin-top: 1px; }
.mini .combo-name { width: 38px; }
.mini .combo-size { width: 23px; margin-left: -3px; }
.mini .pct { font-size: 8px; }
.s-col .mini { left: 286px; top: 62px; }
.s-row .mini { left: 8px; top: 1px; height: 31px; }
.s-row .mini .row + .row { margin-top: 2px; }
.s-bed .mini { left: 243px; top: 15px; width: 160px; height: 33px; font-size: 8px; }
.s-bed .mini .row { height: 15px; padding-right: 0; }
.s-bed .mini .combo-name { width: 40px; }
.s-bed .mini .ic { width: 10px; height: 10px; }
.s-bed .mcen, .s-bed .mm { background: #fcdc6c; outline: 1px solid #c9a030; }

/* menus */
.menu { position: absolute; padding: 1px; background: linear-gradient(90deg, #fff 14px, #e2e4e8 14px, #e2e4e8 15px, #fff 15px); border: 1px solid #a7abb0; box-shadow: 2px 2px 2px #0003; }
.menu li, .menu li > button { display: flex; align-items: center; justify-content: flex-start; height: 13px; width: 100%; position: relative; white-space: pre; }
.menu li > button, .menu .head { padding-left: 18px; }
.menu li > button > .ic, .menu .head .ic, .menu li > button > .tile { position: absolute; left: 2px; }
.menu .head { font-weight: bold; background: linear-gradient(90deg, #0000 15px, #eef0f4 15px); height: 11px; }
.menu .opt, .menu .opt > button { height: 15px; }
.menu .opt { padding-left: 15px; }
.menu .opt > .tile { width: 14px; padding: 0; justify-content: center; font: bold 9px Roboto, sans-serif; color: #111; }
.menu .opt > .tile > .ic { position: static; }
.tile { background: #fbe9b4; border: 1px solid #e0b764; }
.menu .sep { height: 2px; margin-left: 18px; width: auto; border-top: 1px dotted #bbb; }
.menu .hot { background: linear-gradient(#fff0a8, #fbdc6a); outline: 1px solid #e6c968; outline-offset: -1px; }
.sub { position: absolute; right: 6px; border: 2px solid transparent; border-left: 3px solid #555; border-right: 0; }
.s-col .menu { left: 286px; top: 101px; width: 83px; }
.s-row .menu { left: 8px; top: 42px; width: 83px; }
.s-row .head { height: 13px; }
.s-row .opt, .s-row .opt > button { height: 17px; }
.s-row .menu .sep { height: 4px; }
.s-bed .menu { left: 243px; top: 56px; width: 129px; font-size: 8px; background: linear-gradient(90deg, #fff 17px, #e2e4e8 17px, #e2e4e8 18px, #fff 18px); }
.s-bed .menu li, .s-bed .menu li > button { height: 14px; }
.s-bed .menu li > button, .s-bed .menu .head { padding-left: 20px; }
.s-bed .menu .opt { height: 17px; padding-left: 18px; }
.s-bed .menu .opt > .tile { padding: 0; height: 15px; width: 15px; }
.s-bed .menu .sep { height: 3px; }
.s-bed .menu .ic { width: 10px; height: 10px; }
.s-merge .drop { left: 339px; top: 50px; width: 98px; font-size: 8px; background: linear-gradient(90deg, #fff 17px, #e2e4e8 17px, #e2e4e8 18px, #fff 18px); }
.drop li, .drop li > button { height: 15px; }
.s-merge .drop li > button { padding-left: 23px; }
.drop .ic { width: 11px; height: 10px; }

/* colour palette */
.palette { position: absolute; left: 164px; top: 17px; width: 99px; padding: 2px 2px 0; background: #fff; border: 1px solid #a7abb0; box-shadow: 1px 1px 2px #0003; }
.s-more .palette { left: 150px; top: -7px; width: 97px; }
.palette h3 { margin: 0; height: 10px; padding: 1px 2px; font-size: 7px; background: #eef0f4; }
.sw { display: grid; grid-template-columns: repeat(10, 7px); justify-content: space-between; padding: 0 1px; }
.sw i { height: 7px; }
.sw.base { padding: 1px; margin-bottom: 3px; }
.sw + h3 { margin-top: 2px; }
.sw.std { padding: 1px 1px 2px; }
.sw .pick-on { outline: 1px solid #e98a3a; outline-offset: -1px; }
.palette button { display: flex; width: 100%; height: 14px; justify-content: flex-start; gap: 6px; padding-left: 2px; }
.palette .none { width: 11px; height: 11px; border: 1px solid #ddd; }
.s-fill .none { background: #fdeec6; border-color: #e0b764; }
.palette .more { border-top: 1px solid #e2e4e8; }
.palette .more .ic { margin: 0 1px; }
.s-more .more { background: linear-gradient(#fff0a8, #fbdc6a); }

/* dialogs */
.dialog { font-family: "DejaVu Sans Condensed", "Noto Sans", sans-serif; font-size: 9px; color: #222; display: flex; flex-direction: column; }
.dialog header { display: flex; justify-content: space-between; }
.dialog h2 { font: 10px "Open Sans", sans-serif; line-height: 14px; color: #222; }
.caps { display: flex; align-self: flex-start; }
.caps button { width: 20px; height: 13px; border: 1px solid #70808f; border-top: 0; background: linear-gradient(#e8eef4, #b5c2cf); }
.caps .close { width: 34px; background: linear-gradient(#e29b8c, #c23b28 50%, #d05a44); border-color: #7a2a20; }
.caps svg { width: 9px; height: 9px; }
.pane { background: #f0f0f0; border: 1px solid #8b929b; flex: 1; display: flex; flex-direction: column; }
.btn { width: 60px; height: 18px; border: 1px solid #777; border-radius: 2px; background: linear-gradient(#f4f4f4 50%, #dcdcdc); }
.btn.def { border-color: #3399c0; box-shadow: inset 0 0 0 1px #8fd6ee; }
.btns { display: flex; justify-content: flex-end; gap: 8px; }
.d-col { position: absolute; left: 138px; top: 176px; width: 135px; height: 76px; padding: 0 4px 4px; background: linear-gradient(#dcebf8, #a9cbe8); border: 1px solid #223; border-radius: 3px; }
.d-col header { height: 20px; }
.d-col h2 { padding: 2px 0; font-size: 9px; }
.d-col .pane { padding: 5px 4px; gap: 7px; }
.field { display: flex; justify-content: space-between; align-items: center; white-space: nowrap; font-size: 8px; }
.field input { width: 60px; height: 15px; border: 1px solid #999; background: #fff; padding-left: 2px; font-size: 9px; }
.d-col .btns { justify-content: space-between; }
.d-col .btn { width: 54px; height: 16px; font-size: 8px; }
.d-colors { position: absolute; left: 310px; top: 29px; width: 188px; height: 202px; padding: 0 3px 3px; background: linear-gradient(90deg, #c5d6ea, #8d9cc8 40%, #7b8bbd 70%, #c3d5ea) top / 100% 15px no-repeat, #bcd3ea; border: 1px solid #5d7186; border-radius: 2px; font-size: 7px; }
.d-colors header { height: 14px; }
.d-colors h2 { font-size: 8px; line-height: 12px; }
.d-colors .caps button { width: 16px; height: 9px; }
.d-colors .caps .close { width: 26px; }
.d-colors .caps svg { width: 7px; height: 7px; }
.d-colors .pane { flex-direction: row; justify-content: space-between; padding: 4px 4px 3px 3px; }
.picker { width: 127px; display: flex; flex-direction: column; }
.ptabs { display: flex; align-items: flex-end; }
.ptabs button { height: 11px; padding: 0 2px; border: 1px solid #999; border-bottom: 0; background: #eee; }
.ptabs .cur { height: 12px; background: #fff; margin-bottom: -1px; position: relative; padding: 0 3px; }
.ptabs .cur span, .ftabs .cur span { outline: 1px dotted #555; }
.sheet-page { flex: 1; background: #fff; border: 1px solid #999; padding: 6px 4px 0; display: flex; flex-direction: column; gap: 3px; }
.hexes { width: 112px; height: 120px; }
.side { display: flex; flex-direction: column; align-items: center; width: 42px; }
.side .btn { width: 41px; height: 12px; }
.side .btn + .btn { margin-top: 5px; }
.side .new { margin-top: auto; margin-bottom: 4px; }
.chip { width: 28px; height: 28px; background: #b1a0c7; border: 1px solid #777; margin-bottom: 4px; }
.arrow { position: absolute; left: 214px; top: 90px; width: 110px; height: 60px; }

/* format cells */
.fmt header { height: 24px; }
.fmt h2 { padding: 4px; }
.fmt .caps { margin-right: 2px; }
.fmt .caps button { width: 23px; height: 15px; }
.fmt .caps .close { width: 38px; }
.caps.pale button { background: #fbfbfb; border-color: #999; width: 24px; }
.fmt .caps.pale { margin: 0; }
.caps.pale button + button { width: 36px; }
.fmt .pane { padding: 6px 1px 6px 5px; }
.ftabs { display: flex; align-items: flex-end; margin-left: 1px; height: 16px; }
.ftabs button { height: 15px; width: 43px; border: 1px solid #999; border-left-width: 0; border-bottom: 0; background: linear-gradient(#f6f6f6, #e0e0e0); }
.ftabs button:first-child { border-left-width: 1px; }
.ftabs .cur { height: 18px; background: #fff; margin-bottom: -1px; position: relative; border-radius: 1px 1px 0 0; }
.page { background: #fff; border: 1px solid #999; padding: 9px 5px 0 6px; }
.fmt .btns { margin-top: 7px; }
.pick { display: flex; position: relative; background: #fff; border: 1px solid #888; height: 17px; }
.pick select { flex: 1; padding: 0 2px; min-width: 0; }
.pick::before { content: ""; position: absolute; right: 0; top: 0; width: 14px; height: 15px; background: #e6e6e6; border: 1px solid #888; }
.pick::after { content: ""; position: absolute; right: 4px; top: 6px; border: 3px solid transparent; border-top: 4px solid #000; border-bottom: 0; }
.chk { display: flex; align-items: center; gap: 3px; }
.chk input { appearance: none; width: 10px; height: 10px; border: 1px solid #8a8a8a; background: linear-gradient(135deg, #ddd, #fff); position: relative; flex: none; }
.chk input:checked::after { content: ""; position: absolute; left: 3px; top: 0; width: 3px; height: 6px; border: solid #2a4a9c; border-width: 0 2px 2px 0; transform: rotate(35deg); }
.fmt fieldset { border: 1px solid #dcdcdc; border-radius: 2px; min-width: 0; }
.fmt legend { padding: 0 2px; margin-left: -5px; line-height: 9px; }
.rule { display: flex; align-items: center; gap: 4px; }
.rule::after { content: ""; flex: 1; border-top: 1px solid #dcdcdc; }

.d-font { height: 380px; padding: 0 1px 4px 4px; background: linear-gradient(#f4f4f4 24%, #b8a84f 29%, #5a22b8 32%, #5a22b8 60%, #d2c8e6 65%); border-right: 1px solid #888; }
.d-font header { margin: 0 -1px 0 -4px; background: radial-gradient(ellipse 16px 10px at 220px 16px, #e8d458, #0000), radial-gradient(ellipse 6px 4px at 181px 12px, #aaa, #0000), radial-gradient(ellipse 6px 4px at 200px 15px, #aaa, #0000), radial-gradient(ellipse 6px 5px at 244px 14px, #bbb, #0000), radial-gradient(ellipse 6px 6px at 288px 15px, #ccd, #0000), radial-gradient(ellipse 5px 4px at 137px 16px, #bbb, #0000), #fcfcfc; }
.d-font .page { height: 297px; }
.d-font .btns { margin-top: 6px; }
.d-font .ftabs .cur { width: 47px; }
.ftabs button:nth-child(2) { width: 51px; }
.ftabs button:last-child { width: 53px; }
.fcols { display: grid; grid-template-columns: 198px 94px 80px; column-gap: 8px; row-gap: 4px; }
.fcol { display: flex; flex-direction: column; }
.fcol label { height: 11px; }
.fcol > input { height: 16px; border: 1px solid #888; padding-left: 2px; }
.list { display: flex; border: 1px solid #888; border-top: 0; height: 66px; padding: 2px 1px 1px; }
.list ul { flex: 1; }
.list li { height: 10px; padding-left: 1px; display: flex; align-items: center; white-space: nowrap; }
.list .named li { padding-left: 14px; position: relative; }
.named svg { position: absolute; left: 1px; width: 10px; height: 10px; }
.list .sel { background: #3399ff; color: #fff; }
.bar { width: 13px; background: #f0f0f0; display: flex; flex-direction: column; align-items: center; padding: 5px 0; }
.bar b { width: 12px; height: 12px; border: 1px solid #999; background: #eee; margin-top: 4px; }
.up, .dn { border: 2px solid transparent; width: 0; height: 0; box-sizing: content-box; }
.up { border-bottom: 3px solid #333; border-top: 0; }
.dn { border-top: 3px solid #333; border-bottom: 0; }
.bar .dn { margin-top: auto; }
.dim .up { border-bottom-color: #999; }
.dim .dn { border-top-color: #999; }
.ink select { background: #000; margin: 3px 16px 2px 2px; }
.ink::before { background: #c6e6f8; }
.end { justify-content: flex-end; }
.fcol .chk { height: 16px; }
.fsets { display: grid; grid-template-columns: 198px 182px; gap: 8px; margin-top: 4px; }
.fsets fieldset { height: 62px; padding: 3px 6px; }
.fsets .chk { height: 16px; }
.sample { height: 44px; border: 1px solid #777; display: flex; align-items: center; justify-content: space-between; font: 11px Lato, sans-serif; }
.sample i { width: 27px; border-top: 1px solid #555; margin-top: 8px; }
.d-font p { margin-top: 28px; white-space: nowrap; }

.d-align { height: 380px; padding: 0 3px 5px 2px; background: linear-gradient(#f4f4f4 22%, #b8a84f 28%, #5a22b8 33%, #5a22b8 60%, #a9a0bb 65%) left / 3px 100% no-repeat, linear-gradient(#f6f6f6, #e4e4ea 90%, #b5adc8); border-right: 1px solid #666; }
.d-align header { background: radial-gradient(ellipse 14px 11px at 213px 15px, #e8cc58, #0000), radial-gradient(ellipse 8px 5px at 176px 13px, #888, #0000), radial-gradient(ellipse 8px 5px at 195px 16px, #888, #0000), radial-gradient(ellipse 9px 6px at 240px 15px, #999, #0000), radial-gradient(ellipse 9px 7px at 134px 16px, #aaa, #0000), radial-gradient(ellipse 8px 7px at 283px 15px, #bbc, #0000), radial-gradient(ellipse 26px 5px at 312px 15px, #bbb, #0000), #f6f6f6; }
.d-align h2 { padding-left: 1px; }
.d-align .pane { padding: 5px 6px 6px 4px; }
.d-align .page { height: 294px; padding-left: 7px; }
.d-align .ftabs button:first-child { width: 41px; }
.d-align .ftabs .cur { width: 55px; }
.acols { display: flex; justify-content: space-between; align-items: flex-start; }
.amain { width: 282px; display: flex; flex-direction: column; }
.agrid { display: flex; gap: 8px; padding: 6px 0 0 7px; }
.avert { width: 115px; display: flex; flex-direction: column; }
.avert label { height: 11px; }
.avert .pick { margin-bottom: 4px; }
.aind { margin-top: 17px; color: #888; display: flex; flex-direction: column; gap: 3px; }
.spin { position: relative; display: flex; width: 47px; height: 16px; border: 1px solid #aaa; background: #fff; color: #222; }
.spin input { width: 32px; padding-left: 2px; }
.spin::after { content: ""; position: absolute; right: 1px; top: 1px; width: 10px; height: 12px; border: 1px solid #bbb; background: #eef; }
.spin i { position: absolute; right: 4px; z-index: 1; }
.spin .up { top: 3px; } .spin .dn { bottom: 3px; }
.ind { margin-left: 8px; height: 15px; }
.dim { color: #888; }
.agrid + .ind { height: 13px; }
.amain .rule { height: 10px; }
.rule + .ind { margin-top: 4px; }
.amain .ind + .rule { margin-top: 6px; }
.adir { padding: 6px 0 0 7px; display: flex; flex-direction: column; gap: 3px; }
.adir .pick { width: 76px; }
.ori { width: 98px; height: 138px; padding: 4px 6px; }
.obox { display: flex; gap: 3px; }
.otext { width: 20px; height: 102px; border: 1px solid #777; flex-direction: column; gap: 2px; }
.dial { width: 53px; height: 102px; border: 1px solid #777; font-size: 9px; }
.odeg { display: flex; align-items: center; gap: 3px; margin-top: 2px; }
.note { position: absolute; left: 146px; top: 242px; width: 300px; height: 60px; padding: 4px 0 0 11px; background: #fff; font: bold 14px/19px Lato, sans-serif; color: #d90f14; white-space: nowrap; }

.d-border { position: absolute; left: 102px; top: 1px; width: 373px; height: 337px; padding: 0 9px 9px; border: 2px solid #333; border-radius: 5px; background: #ececec; font-size: 8px; box-shadow: 0 0 4px #000; }
.d-border header { background: radial-gradient(ellipse 14px 5px at 60px 12px, #ccc, #0000), radial-gradient(ellipse 24px 6px at 235px 12px, #ccc, #0000), #0000; height: 24px; }
.d-border h2 { font-size: 9px; padding: 2px 0; margin-left: -5px; }
.d-border .caps { margin-right: -5px; }
.d-border .caps button { width: 20px; height: 12px; }
.d-border .caps .close { width: 34px; }
.d-border .pane { border: 0; padding: 1px 0 0; background: none; }
.d-border .ftabs { height: 15px; }
.d-border .ftabs button { width: 38px; height: 14px; }
.d-border .ftabs button:nth-child(2) { width: 46px; }
.d-border .ftabs .cur { width: 40px; height: 17px; }
.d-border .ftabs button:last-child { width: 47px; }
.d-border .page { height: 261px; padding: 6px 5px 0; }
.bcols { display: flex; gap: 6px; }
.line { width: 95px; height: 163px; padding: 5px 5px 0; display: flex; flex-direction: column; }
.line .lbl { display: block; height: 11px; }
.styles { width: 83px; height: 82px; border: 1px solid #888; display: block; margin-bottom: 9px; }
.line .pick { height: 15px; }
.line .pick select { text-align: center; padding: 0 14px 0 4px; }
.line .pick::before { width: 12px; height: 13px; }
.line .pick::after { right: 3px; top: 5px; }
.bright { width: 160px; }
.presets { display: flex; gap: 8px; padding: 5px 0 0 31px; }
.presets div { display: flex; flex-direction: column; align-items: center; gap: 4px; width: 30px; }
.presets button, .bgrid button { border: 1px solid #999; border-radius: 2px; background: linear-gradient(#f6f6f6, #d9d9d9); }
.presets button { width: 30px; height: 27px; }
.presets svg { width: 22px; height: 22px; }
.presets + .rule { margin-top: 7px; }
.bgrid { display: grid; grid-template-columns: 16px 107px; grid-template-rows: 16px 16px 16px 16px; row-gap: 10px; column-gap: 8px; padding: 6px 0 0 7px; }
.bgrid button { width: 16px; height: 16px; grid-column: 1; }
.bgrid svg { width: 12px; height: 12px; }
.prev { grid-column: 2; grid-row: 1 / 4; border: 1px solid #888; position: relative; display: flex; flex-direction: column; align-items: center; justify-content: space-evenly; }
.prev svg { position: absolute; left: 0; top: 0; width: 105px; height: 67px; }
.brow { grid-column: 1 / 3; display: flex; width: 153px; justify-content: space-between; margin-top: -6px; }
.bgrid .on { background: #7fb8e4; outline: 0; border-color: #2c628b; }
.bgrid .off { border-color: #ccc; background: #f6f6f6; margin: 0 20px; }
.d-border p { margin-top: 10px; font: 8px/10px Roboto, sans-serif; }
.d-border .btns { margin-top: 6px; gap: 7px; }
.d-border .btn { width: 53px; height: 16px; }
```
FILE: app.js
```js
// Stamp shared toolbars from their templates.
document.querySelectorAll('[data-tpl]').forEach(function (el) {
  el.appendChild(document.getElementById(el.dataset.tpl).content.cloneNode(true));
});

// Worksheets: header row, row numbers and filled ranges.
function range(text) {
  var m = text.match(/([A-Z])(\d+):([A-Z])(\d+)/);
  return { c0: m[1], r0: +m[2], c1: m[3], r1: +m[4] };
}
document.querySelectorAll('table.sheet').forEach(function (t) {
  var d = t.dataset, cols = d.cols.split('');
  var hot = d.hot ? range(d.hot) : null;
  var mute = d.muterows ? d.muterows.split('-').map(Number) : [0, -1];
  var fills = (d.fill || '').split(' ').filter(Boolean).map(function (f) {
    var p = f.split('='), r = range(p[0]);
    r.cls = p[1];
    return r;
  });
  var text = (d.text || '').split('=');
  var html = '<colgroup><col>' + cols.map(function () { return '<col>'; }).join('') + '</colgroup><thead><tr class="top"><th class="corner"></th>';
  cols.forEach(function (c) {
    var cls = hot && c >= hot.c0 && c <= hot.c1 ? 'hot' : (d.mute || '').indexOf(c) >= 0 ? 'mute' : '';
    html += '<th scope="col" class="' + cls + '">' + c + '</th>';
  });
  html += '</tr></thead><tbody>';
  for (var r = 1; r <= +d.rows; r++) {
    var rc = hot && r >= hot.r0 && r <= hot.r1 ? 'hot' : r >= mute[0] && r <= mute[1] ? 'mute' : '';
    html += '<tr><th scope="row" class="' + rc + '">' + r + '</th>';
    cols.forEach(function (c) {
      var cls = '';
      fills.forEach(function (f) { if (c >= f.c0 && c <= f.c1 && r >= f.r0 && r <= f.r1) cls = f.cls; });
      html += '<td class="' + cls + '">' + (text[0] === c + r ? text[1] : '') + '</td>';
    });
    html += '</tr>';
  }
  t.innerHTML = html + '</tbody>';
});

// Theme and standard colour swatches.
var theme = [
  ['#fff', '#000', '#eeece1', '#1f497d', '#4f81bd', '#c0504d', '#9bbb59', '#8064a2', '#4bacc6', '#f79646'],
  ['#f2f2f2', '#7f7f7f', '#ddd9c3', '#c6d9f0', '#dbe5f1', '#f2dcdb', '#ebf1dd', '#e5e0ec', '#dbeef3', '#fdeada'],
  ['#d8d8d8', '#595959', '#c4bd97', '#8db3e2', '#b8cce4', '#e5b9b7', '#d7e3bc', '#ccc1d9', '#b7dde8', '#fbd5b5'],
  ['#bfbfbf', '#3f3f3f', '#938953', '#548dd4', '#95b3d7', '#d99694', '#c3d69b', '#b2a2c7', '#92cddc', '#fac08f'],
  ['#a5a5a5', '#262626', '#494429', '#17365d', '#366092', '#953734', '#76923c', '#5f497a', '#31859b', '#e36c09'],
  ['#7f7f7f', '#0c0c0c', '#1d1b10', '#0f243e', '#244061', '#632423', '#4f6128', '#3f3151', '#205867', '#974806']
];
var standard = ['#c00000', '#ff0000', '#ffc000', '#ffff00', '#92d050', '#00b050', '#00b0f0', '#0070c0', '#002060', '#7030a0'];
function chips(list, mark) {
  return list.map(function (c) { return '<i' + (mark && c === '#b2a2c7' ? ' class="pick-on"' : '') + ' style="background:' + c + '"></i>'; }).join('');
}
document.querySelectorAll('[data-palette]').forEach(function (p, n) {
  p.innerHTML = '<h3>Theme Colors</h3><div class="sw base">' + chips(theme[0]) + '</div><div class="sw">' +
    theme.slice(1).map(function (row) { return chips(row, n === 0); }).join('') + '</div><h3>Standard Colors</h3><div class="sw std">' + chips(standard) +
    '</div><button><span class="none"></span><span><u>N</u>o Fill</span></button>' +
    '<button class="more"><svg class="ic"><use href="#i-palette"/></svg><span><u>M</u>ore Colors...</span></button>';
});

// Honeycomb colour picker.
var comb = [
  '003366 336699 3366cc 003399 000099 0000cc 000066',
  '006666 006699 0099cc 0066cc 0033cc 0000ff 3333ff 333399',
  '008080 009999 33cccc 00ccff 0099ff 0066ff 3366ff 3333cc 666699',
  '339966 00cc99 00ffcc 00ffff 33ccff 3399ff 6699ff 6666ff 6600ff 6600cc',
  '339933 00cc66 00ff99 66ffcc 66ffff 66ccff 99ccff 9999ff 9966ff 9933ff 9900ff',
  '006600 00cc00 00ff00 66ff99 99ffcc ccffff ccccff cc99ff cc66ff cc33ff cc00ff 9900cc',
  '003300 009933 33cc33 66ff66 99ff99 ccffcc ffffff ffccff ff99ff ff66ff ff00ff cc00cc 660066',
  '336600 009900 66ff33 99ff66 ccff99 ffffcc ffcccc ff99cc ff66cc ff33cc cc0099 993399',
  '333300 669900 99ff33 ccff66 ffff99 ffcc99 ff9999 ff6699 ff3399 cc3399 990099',
  '666633 99cc00 ccff33 ffff66 ffcc66 ff9966 ff6666 ff0066 cc6699 993366',
  '999966 cccc00 ffff00 ffcc00 ff9933 ff6600 ff5050 cc0066 660033',
  '996633 cc9900 ff9900 cc6600 ff3300 ff0000 cc0000 990033',
  '663300 996600 cc3300 993300 990000 800000 993333'
];
var W = 7.9, H = 6.8, out = '';
function hex(x, y, w, fill) {
  var a = w / 2, b = w * 0.58, pts = [[0, -b], [a, -b / 2], [a, b / 2], [0, b], [-a, b / 2], [-a, -b / 2]];
  return '<polygon fill="' + fill + '" points="' + pts.map(function (p) { return (x + p[0]).toFixed(1) + ',' + (y + p[1]).toFixed(1); }).join(' ') + '"/>';
}
comb.forEach(function (line, r) {
  var row = line.split(' ');
  row.forEach(function (c, i) { out += hex(52 + (i - (row.length - 1) / 2) * W, 5 + r * H, W, '#' + c); });
});
['#fafafa', '#ddd', '#b2b2b2', '#808080', '#5f5f5f', '#333', '#1c1c1c', '#080808'].forEach(function (c, i) { out += hex(24 + i * W, 101, W, c); });
['#eaeaea', '#c0c0c0', '#969696', '#777', '#4d4d4d', '#292929', '#111'].forEach(function (c, i) { out += hex(28 + i * W, 108, W, c); });
out += hex(95, 104, 16, '#000');
document.getElementById('hexes').innerHTML = out;

// Orientation dial marks, one every 15 degrees.
var dots = '';
for (var a = -90; a <= 90; a += 15) {
  var x = 4 + 44 * Math.cos(a * Math.PI / 180), y = 51 + 44 * Math.sin(a * Math.PI / 180), s = a % 45 ? 0.8 : 3;
  dots += '<path fill="' + (a === 0 ? '#a01818' : '#000') + '" d="M' + (x - s) + ' ' + y + 'l' + s + ' ' + -s + ' ' + s + ' ' + s + ' ' + -s + ' ' + s + 'z"/>';
}
document.getElementById('dots').innerHTML = dots;
```
